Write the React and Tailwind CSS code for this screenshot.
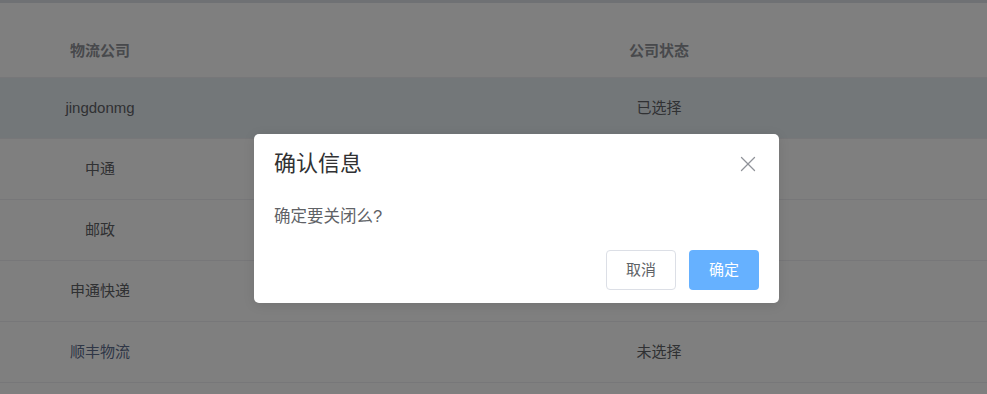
import { X } from 'lucide-react';

const rows = [
  { name: 'jingdonmg', status: '已选择', active: true },
  { name: '中通', status: '' },
  { name: '邮政', status: '' },
  { name: '申通快递', status: '' },
  { name: '顺丰物流', status: '未选择', blue: true },
  { name: '', status: '' },
];

const App = () => {
  return (
    <div
      className="relative w-[987px] h-[394px] overflow-hidden bg-white"
      style={{ fontFamily: '"Liberation Sans", "Noto Sans CJK SC", sans-serif' }}
    >
      {/* Table behind the mask */}
      <div className="h-[3px] bg-[#dfe2e9]" />
      <div className="w-[1118px]">
        <div className="grid grid-cols-[200px_918px] h-[75px] pt-[22px] border-b border-[#eeeff3]">
          <div className="flex items-center justify-center text-[15px] font-bold text-[#909399]">物流公司</div>
          <div className="flex items-center justify-center text-[15px] font-bold text-[#909399]">公司状态</div>
        </div>
        {rows.map((row, i) => (
          <div
            key={i}
            className={`grid grid-cols-[200px_918px] h-[61px] border-b border-[#eeeff3] ${row.active ? 'bg-[#e7eef3]' : ''}`}
          >
            <div className={`flex items-center justify-center text-[15px] ${row.blue ? 'text-[#5d6c8c]' : 'text-[#606266]'}`}>
              {row.name}
            </div>
            <div className="flex items-center justify-center text-[15px] text-[#606266]">{row.status}</div>
          </div>
        ))}
      </div>

      {/* Mask */}
      <div className="absolute inset-0 bg-black/50" />

      {/* Message box */}
      <div className="absolute left-[254px] top-[134px] w-[525px] h-[169px] bg-white rounded-[5px] shadow-[0_2px_12px_rgba(0,0,0,0.1)] flex flex-col">
        <div className="flex items-center justify-between pl-5 pr-[18px] h-[60px]">
          <span className="text-[22px] text-[#303133] leading-none">确认信息</span>
          <X className="w-[26px] h-[26px] text-[#909399]" strokeWidth={1.2} />
        </div>
        <div className="px-5 pt-[14px] text-[16.5px] text-[#606266] leading-none">确定要关闭么?</div>
        <div className="flex justify-end gap-[13px] px-5 mt-auto mb-[13px]">
          <button className="w-[70px] h-[40px] rounded-[4px] border border-[#dcdfe6] bg-white text-[15px] text-[#606266]">
            取消
          </button>
          <button className="w-[70px] h-[40px] rounded-[4px] bg-[#66b1ff] text-[15px] text-white">
            确定
          </button>
        </div>
      </div>
    </div>
  );
};

export default App;
